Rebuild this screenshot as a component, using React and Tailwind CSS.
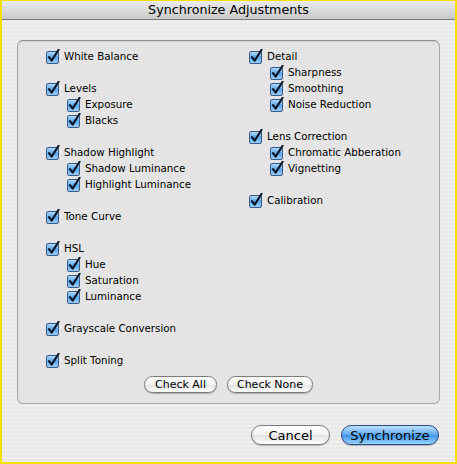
import React from "react";

function Check() {
  return (
    <svg width="14" height="15" viewBox="0 0 14 15" className="shrink-0">
      <defs>
        <linearGradient id="cbg" x1="0" y1="0" x2="0" y2="1">
          <stop offset="0" stopColor="#b9dcfb" />
          <stop offset="0.5" stopColor="#5aa7ee" />
          <stop offset="1" stopColor="#9fd2fb" />
        </linearGradient>
      </defs>
      <rect x="0.5" y="2.5" width="12" height="12" rx="1.5" fill="url(#cbg)" stroke="#3b5a86" />
      <path d="M3 8.2 L5.6 11.6 L12.6 0.8" fill="none" stroke="#0d1220" strokeWidth="2.1" strokeLinecap="round" strokeLinejoin="round" />
    </svg>
  );
}

function Row({ label, sub }) {
  return (
    <div className={`flex h-4 items-center gap-[4px] ${sub ? "pl-[21px]" : ""}`}>
      <Check />
      <span className="text-[10.3px] text-black leading-none">{label}</span>
    </div>
  );
}

const Gap = () => <div className="h-4" />;

function AquaButton({ children, blue, className }) {
  return (
    <button
      className={`rounded-full border text-black leading-none ${
        blue
          ? "border-[#2b4a87] bg-[linear-gradient(#bfe0ff,#5ba8f0_50%,#3f92e8_51%,#9bd5ff)]"
          : "border-[#7c7c7c] bg-[linear-gradient(#ffffff,#f2f2f2_50%,#e2e2e2_51%,#ffffff)]"
      } shadow-[0_1px_1px_rgba(0,0,0,0.25)] ${className}`}
    >
      {children}
    </button>
  );
}

export default function App() {
  return (
    <div
      className="w-[457px] h-[464px] border-[#f5e100] border-x-2 border-b-2 border-t flex flex-col overflow-hidden bg-[repeating-linear-gradient(#efefef_0px,#efefef_2px,#e8e8e8_2px,#e8e8e8_4px)]"
      style={{ fontFamily: '"DejaVu Sans", "Noto Sans", sans-serif' }}
    >
      {/* title bar */}
      <div className="h-[19px] shrink-0 flex items-center justify-center border-b border-[#7a7a7a] bg-[linear-gradient(#ececec,#c9c9c9)]">
        <span className="text-[12.7px] text-black">Synchronize Adjustments</span>
      </div>

      {/* group box */}
      <div className="mt-5 ml-[15px] w-[423px] h-[364px] rounded-[6px] border border-[#a8a8a8] border-t-[#8e8e8e] bg-[#e4e4e4] shadow-[inset_0_1px_1px_rgba(0,0,0,0.08)] flex flex-col pt-[7px]">
        <div className="flex pl-[28px]">
          <div className="w-[203px] flex flex-col">
            <Row label="White Balance" />
            <Gap />
            <Row label="Levels" />
            <Row label="Exposure" sub />
            <Row label="Blacks" sub />
            <Gap />
            <Row label="Shadow Highlight" />
            <Row label="Shadow Luminance" sub />
            <Row label="Highlight Luminance" sub />
            <Gap />
            <Row label="Tone Curve" />
            <Gap />
            <Row label="HSL" />
            <Row label="Hue" sub />
            <Row label="Saturation" sub />
            <Row label="Luminance" sub />
            <Gap />
            <Row label="Grayscale Conversion" />
            <Gap />
            <Row label="Split Toning" />
          </div>
          <div className="flex flex-col">
            <Row label="Detail" />
            <Row label="Sharpness" sub />
            <Row label="Smoothing" sub />
            <Row label="Noise Reduction" sub />
            <Gap />
            <Row label="Lens Correction" />
            <Row label="Chromatic Abberation" sub />
            <Row label="Vignetting" sub />
            <Gap />
            <Row label="Calibration" />
          </div>
        </div>
        <div className="flex justify-center gap-[10px] mt-[8px]">
          <AquaButton className="w-[73px] h-[17px] text-[11px]">Check All</AquaButton>
          <AquaButton className="w-[86px] h-[17px] text-[11px]">Check None</AquaButton>
        </div>
      </div>

      {/* bottom buttons */}
      <div className="flex justify-end gap-[11px] pr-4 mt-[21px]">
        <AquaButton className="w-[79px] h-5 text-[13px]">Cancel</AquaButton>
        <AquaButton blue className="w-[98px] h-5 text-[13px]">Synchronize</AquaButton>
      </div>
    </div>
  );
}
